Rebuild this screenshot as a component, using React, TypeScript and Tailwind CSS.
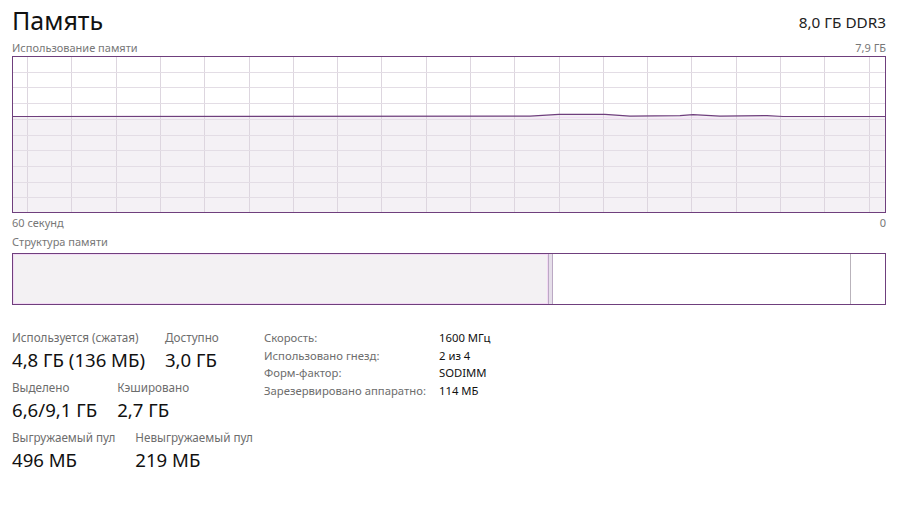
import React from "react";

const FONT = { fontFamily: '"Noto Sans", "Open Sans", sans-serif' };

const W = 874;
const H = 157;

const UsageChart = () => {
    const vLines: number[] = [];
    for (let x = 15; x < W; x += 44.3) vLines.push(Math.round(x) + 0.5);
    const hLines: number[] = [];
    for (let i = 1; i < 10; i++) hLines.push(Math.round((H / 10) * i) + 0.5);

    const pts: [number, number][] = [
        [0, 60.5], [518, 60.2], [547, 58.4], [593, 58.4], [618, 60.1], [668, 59.6],
        [681, 58.6], [708, 60.1], [755, 59.6], [771, 60.5], [W, 60.5],
    ];
    const line = pts.map(([x, y]) => `${x},${y}`).join(" ");
    const area = `0,${H} ${line} ${W},${H}`;

    return (
        <svg width={W} height={H} viewBox={`0 0 ${W} ${H}`} className="block">
            <rect x="0" y="0" width={W} height={H} fill="#ffffff" />
            <polygon points={area} fill="#f4f1f5" />
            <polyline points={pts.map(([x, y]) => `${x},${y + 3}`).join(" ")} fill="none" stroke="#f3dcf6" strokeWidth="1" />
            {vLines.map((x) => (
                <line key={"v" + x} x1={x} y1={0} x2={x} y2={H} stroke="#ddd6df" strokeWidth="1" />
            ))}
            {hLines.map((y) => (
                <line key={"h" + y} x1={0} y1={y} x2={W} y2={y} stroke="#e3dde5" strokeWidth="1" />
            ))}
            <polyline points={line} fill="none" stroke="#6f3f7d" strokeWidth="1.2" />
            <rect x="0.5" y="0.5" width={W - 1} height={H - 1} fill="none" stroke="#6f3f7d" strokeWidth="1" />
        </svg>
    );
};

const CompositionBar = () => (
    <div className="flex h-[52px] w-full border border-[#6f3f7d] bg-white">
        <div className="w-[535px] bg-[#f3f1f3] border border-[#f3d9f5]"></div>
        <div className="w-[5px] bg-[#e6dfea] border-x border-[#bba9c4]"></div>
        <div className="flex-1 bg-white"></div>
        <div className="w-px bg-[#b9b3bb]"></div>
        <div className="w-[34px] bg-white"></div>
    </div>
);

const Stat = ({ label, value }: { label: string; value: string }) => (
    <div className="flex flex-col whitespace-nowrap">
        <div className="text-[11.7px] leading-[16px] text-[#6d6d6d]">{label}</div>
        <div className="text-[18.6px] leading-[24px] text-[#111] mt-[3px]">{value}</div>
    </div>
);

const App = () => {
    return (
        <div className="w-[900px] h-[505px] bg-white pl-[12px] pr-[14px] overflow-hidden" style={FONT}>
            <div className="flex items-end justify-between h-[37px]">
                <div className="text-[25px] leading-[34px] text-[#111]">Память</div>
                <div className="text-[15.3px] leading-[22px] text-[#222] mb-[4px]">8,0 ГБ DDR3</div>
            </div>
            <div className="flex justify-between text-[11px] leading-[15px] text-[#777] mt-[3px] mb-[1px]">
                <span>Использование памяти</span>
                <span>7,9 ГБ</span>
            </div>
            <UsageChart />
            <div className="flex justify-between text-[11px] leading-[15px] text-[#777] mt-[2px]">
                <span>60 секунд</span>
                <span>0</span>
            </div>
            <div className="text-[11px] leading-[15px] text-[#777] mt-[4px] mb-[4px]">Структура памяти</div>
            <CompositionBar />

            <div className="flex items-start mt-[24px]">
                <div className="flex flex-col gap-[7px] w-[252px] shrink-0">
                    <div className="flex gap-[20px]">
                        <Stat label="Используется (сжатая)" value="4,8 ГБ (136 МБ)" />
                        <Stat label="Доступно" value="3,0 ГБ" />
                    </div>
                    <div className="flex gap-[20px]">
                        <Stat label="Выделено" value="6,6/9,1 ГБ" />
                        <Stat label="Кэшировано" value="2,7 ГБ" />
                    </div>
                    <div className="flex gap-[20px]">
                        <Stat label="Выгружаемый пул" value="496 МБ" />
                        <Stat label="Невыгружаемый пул" value="219 МБ" />
                    </div>
                </div>
                <div className="grid grid-cols-[175px_auto] text-[11.3px] leading-[17.6px] whitespace-nowrap">
                    <span className="text-[#6d6d6d]">Скорость:</span>
                    <span className="text-[#111]">1600 МГц</span>
                    <span className="text-[#6d6d6d]">Использовано гнезд:</span>
                    <span className="text-[#111]">2 из 4</span>
                    <span className="text-[#6d6d6d]">Форм-фактор:</span>
                    <span className="text-[#111]">SODIMM</span>
                    <span className="text-[#6d6d6d]">Зарезервировано аппаратно:</span>
                    <span className="text-[#111]">114 МБ</span>
                </div>
            </div>
        </div>
    );
};

export default App;
